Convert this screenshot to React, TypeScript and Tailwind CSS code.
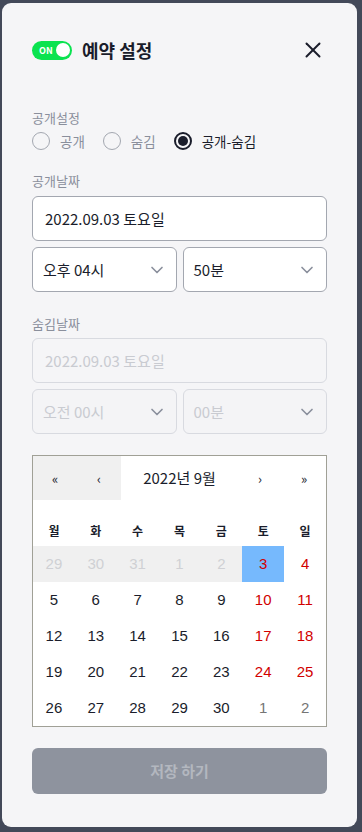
import { ChevronDown, X } from 'lucide-react';

const weekdays = ['월', '화', '수', '목', '금', '토', '일'];

type Day = { d: number; kind: 'disabled' | 'normal' | 'weekend' | 'next' | 'active' };

const days: Day[] = [
  { d: 29, kind: 'disabled' },
  { d: 30, kind: 'disabled' },
  { d: 31, kind: 'disabled' },
  { d: 1, kind: 'disabled' },
  { d: 2, kind: 'disabled' },
  { d: 3, kind: 'active' },
  { d: 4, kind: 'weekend' },
];
for (let d = 5; d <= 30; d++) {
  const col = (d - 5) % 7;
  days.push({ d, kind: col >= 5 ? 'weekend' : 'normal' });
}
days.push({ d: 1, kind: 'next' }, { d: 2, kind: 'next' });

function dayClass(kind: Day['kind']) {
  switch (kind) {
    case 'disabled':
      return 'bg-[#f0f0f0] text-[#cfd0d4]';
    case 'active':
      return 'bg-[#76b9fd] text-[#d10000]';
    case 'weekend':
      return 'text-[#d10000]';
    case 'next':
      return 'text-[#757575]';
    default:
      return 'text-[#1a1d2b]';
  }
}

function Radio({ label, checked }: { label: string; checked?: boolean }) {
  return (
    <div className="flex items-center gap-[10px]">
      <span
        className={`flex h-[18px] w-[18px] items-center justify-center rounded-full ${
          checked ? 'border-2 border-[#1a1d2b]' : 'border-[1.5px] border-[#a3a7b0]'
        }`}
      >
        {checked && <span className="h-[10px] w-[10px] rounded-full bg-[#1a1d2b]" />}
      </span>
      <span className={`text-[13.5px] ${checked ? 'text-[#1a1d2b]' : 'text-[#8a8f9c]'}`}>{label}</span>
    </div>
  );
}

function SelectBox({ value, disabled }: { value: string; disabled?: boolean }) {
  return (
    <div
      className={`flex h-[45px] flex-1 items-center justify-between rounded-[6px] border pl-[10px] pr-[9px] ${
        disabled ? 'border-[#d8dae0] bg-[#f4f4f6]' : 'border-[#a3a7b0] bg-white'
      }`}
    >
      <span className={`text-[15px] ${disabled ? 'text-[#c9cbd1]' : 'text-[#1a1d2b]'}`}>{value}</span>
      <ChevronDown className="h-[20px] w-[20px] text-[#8a8f9c]" strokeWidth={2} />
    </div>
  );
}

export default function App() {
  return (
    <div
      className="min-h-[832px] w-full bg-[#434959] pt-[3px]"
      style={{ fontFamily: '"Noto Sans CJK KR", "Noto Sans", sans-serif' }}
    >
      <div className="ml-[2px] w-[355px] rounded-[9px] bg-[#f5f5f7] px-[30px] pb-[33px] pt-[37px]">
        {/* header */}
        <div className="flex h-[20px] items-center justify-between">
          <div className="flex items-center gap-[10px]">
            <div className="flex h-[19px] w-[40px] items-center justify-between rounded-full bg-[#0ae34f] pl-[7px] pr-[2px]">
              <span className="text-[9px] font-bold leading-none text-white">ON</span>
              <span className="h-[14px] w-[14px] rounded-full bg-white" />
            </div>
            <span className="text-[18px] font-bold leading-none text-[#1a1d2b]">예약 설정</span>
          </div>
          <X className="mr-[1px] h-[26px] w-[26px] text-[#1a1d2b]" strokeWidth={1.8} />
        </div>

        {/* visibility */}
        <p className="mt-[49px] text-[13px] leading-[18px] text-[#8a8f9c]">공개설정</p>
        <div className="mt-[4px] flex items-center gap-[18px]">
          <Radio label="공개" />
          <Radio label="숨김" />
          <Radio label="공개-숨김" checked />
        </div>

        {/* open date */}
        <p className="mt-[21px] text-[13px] leading-[18px] text-[#8a8f9c]">공개날짜</p>
        <div className="mt-[6px] flex h-[45px] items-center rounded-[6px] border border-[#a3a7b0] bg-white px-[12px]">
          <span className="text-[15px] text-[#1a1d2b]">2022.09.03 토요일</span>
        </div>
        <div className="mt-[6px] flex gap-[6px]">
          <SelectBox value="오후 04시" />
          <SelectBox value="50분" />
        </div>

        {/* hide date */}
        <p className="mt-[23px] text-[13px] leading-[18px] text-[#8a8f9c]">숨김날짜</p>
        <div className="mt-[5px] flex h-[45px] items-center rounded-[6px] border border-[#d8dae0] px-[12px]">
          <span className="text-[15px] text-[#c9cbd1]">2022.09.03 토요일</span>
        </div>
        <div className="mt-[6px] flex gap-[6px]">
          <SelectBox value="오전 00시" disabled />
          <SelectBox value="00분" disabled />
        </div>

        {/* calendar */}
        <div className="mt-[21px] border border-[#a0a096] bg-white">
          <div className="flex h-[44px]">
            <div className="flex w-[44px] items-center justify-center bg-[#f0f0f0] text-[13px] text-[#1a1d2b]">«</div>
            <div className="flex w-[44px] items-center justify-center bg-[#f0f0f0] text-[13px] text-[#1a1d2b]">‹</div>
            <div className="flex flex-1 items-center justify-center text-[15px] text-[#1a1d2b]">2022년 9월</div>
            <div className="flex w-[44px] items-center justify-center text-[13px] text-[#1a1d2b]">›</div>
            <div className="flex w-[44px] items-center justify-center text-[13px] text-[#1a1d2b]">»</div>
          </div>
          <div className="mt-[16px] grid h-[30px] grid-cols-7">
            {weekdays.map((w) => (
              <div key={w} className="flex items-center justify-center text-[12px] font-bold text-[#1a1d2b]">
                {w}
              </div>
            ))}
          </div>
          <div className="grid grid-cols-7" style={{ fontFamily: '"Liberation Sans", Arial, sans-serif' }}>
            {days.map((day, i) => (
              <div key={i} className={`flex h-[36px] items-center justify-center text-[15px] ${dayClass(day.kind)}`}>
                {day.d}
              </div>
            ))}
          </div>
        </div>

        <button className="mt-[21px] flex h-[46px] w-full items-center justify-center rounded-[6px] bg-[#8e939e] text-[15px] font-bold text-[#b3b7bf]">
          저장 하기
        </button>
      </div>
    </div>
  );
}
